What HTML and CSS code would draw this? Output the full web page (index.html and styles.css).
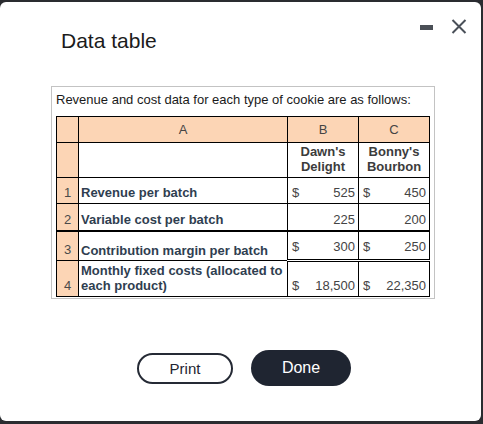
FILE: index.html
```html
<!DOCTYPE html>
<html>
<head>
<meta charset="utf-8">
<link rel="stylesheet" href="styles.css">
</head>
<body>
<div class="dialog">
  <div class="header">
    <h1 class="title">Data table</h1>
    <div class="controls">
      <span class="minimize"></span>
      <svg class="close" width="16" height="15" viewBox="0 0 16 15"><path d="M1.5 1 L14.5 14 M14.5 1 L1.5 14" stroke="#4a5059" stroke-width="2" fill="none"/></svg>
    </div>
  </div>
  <div class="box">
    <p class="intro">Revenue and cost data for each type of cookie are as follows:</p>
    <table class="data">
      <colgroup>
        <col class="c-idx"><col class="c-a"><col class="c-b"><col class="c-c">
      </colgroup>
      <tr class="r-head">
        <td class="idx"></td><td class="hd">A</td><td class="hd">B</td><td class="hd">C</td>
      </tr>
      <tr class="r-names">
        <td class="idx"></td><td></td><td class="nm">Dawn's<br>Delight</td><td class="nm">Bonny's<br>Bourbon</td>
      </tr>
      <tr class="r1">
        <td class="idx">1</td><td class="lbl">Revenue per batch</td>
        <td><div class="amt"><span>$</span><span>525</span></div></td>
        <td><div class="amt"><span>$</span><span>450</span></div></td>
      </tr>
      <tr class="r2">
        <td class="idx">2</td><td class="lbl">Variable cost per batch</td>
        <td><div class="amt"><span></span><span>225</span></div></td>
        <td><div class="amt"><span></span><span>200</span></div></td>
      </tr>
      <tr class="r3">
        <td class="idx">3</td><td class="lbl">Contribution margin per batch</td>
        <td class="dbl"><div class="amt"><span>$</span><span>300</span></div></td>
        <td class="dbl"><div class="amt"><span>$</span><span>250</span></div></td>
      </tr>
      <tr class="r4">
        <td class="idx">4</td><td class="lbl">Monthly fixed costs (allocated to<br>each product)</td>
        <td><div class="amt"><span>$</span><span>18,500</span></div></td>
        <td><div class="amt"><span>$</span><span>22,350</span></div></td>
      </tr>
    </table>
  </div>
  <div class="actions">
    <button class="btn print">Print</button>
    <button class="btn done">Done</button>
  </div>
</div>
</body>
</html>
```
FILE: styles.css
```css
html, body {
  margin: 0;
  padding: 0;
  background: #2a2c30;
  width: 483px;
  height: 424px;
  overflow: hidden;
  font-family: "Liberation Sans", Arial, sans-serif;
}
.dialog {
  margin-top: 2px;
  width: 481px;
  height: 419px;
  background: #ffffff;
  border-radius: 6px;
  position: relative;
}
.header {
  display: flex;
  justify-content: space-between;
  align-items: flex-start;
}
.title {
  margin: 27px 0 0 61px;
  font-size: 21px;
  line-height: 24px;
  font-weight: normal;
  color: #1b1b1b;
}
.controls {
  display: flex;
  align-items: flex-start;
  margin: 17px 14px 0 0;
}
.minimize {
  display: block;
  width: 13px;
  height: 5px;
  background: #4a4f56;
  margin: 6px 18px 0 0;
}
.close {
  display: block;
}
.box {
  margin: 33px 0 0 51px;
  width: 382px;
  height: 211px;
  border: 1px solid #c3c3c3;
  padding: 0;
}
.intro {
  margin: 5px 0 0 4px;
  font-size: 13px;
  line-height: 15px;
  color: #1a1a1a;
}
.data {
  margin: 9px 0 0 4px;
  border-collapse: collapse;
  table-layout: fixed;
  width: 374px;
  font-size: 13px;
  line-height: 15px;
}
.c-idx { width: 22px; }
.c-a { width: 209px; }
.c-b { width: 71px; }
.c-c { width: 71px; }
.data td {
  border: 1px solid #000;
  padding: 0 3px 3px 2px;
  vertical-align: bottom;
  color: #444;
  white-space: nowrap;
}
.data td.idx {
  background: #fcd5b5;
  text-align: center;
  padding: 0 0 3px 0;
  color: #4a4a4a;
}
.r-head td {
  background: #fcd5b5;
  height: 25px;
  vertical-align: middle;
  padding: 0;
}
.r-head td.idx { vertical-align: middle; padding: 0; }
.hd {
  text-align: center;
  color: #5a5a5a;
}
.r-names td { height: 31px; }
.data td.nm {
  text-align: center;
  font-weight: bold;
  color: #3c3c3c;
  padding: 0 0 3px 0;
}
.r1 td { height: 22px; }
.r2 td { height: 23px; border-bottom-width: 2px; }
.r3 td { height: 25px; padding-bottom: 2px; }
.data td.dbl { border-bottom: 3px double #000; padding-bottom: 5px; height: 20px; }
.r4 td { height: 31px; }
.lbl {
  font-weight: bold;
  color: #2f3e50 !important;
}
.amt {
  display: flex;
  justify-content: space-between;
  padding-left: 2px;
}
.actions {
  display: flex;
  align-items: center;
  margin: 51px 0 0 137px;
  gap: 18px;
}
.btn {
  font-family: "Liberation Sans", Arial, sans-serif;
  border-radius: 18px;
  cursor: pointer;
  padding: 0;
}
.print {
  width: 96px;
  height: 31px;
  background: #fff;
  border: 2px solid #252a35;
  color: #1f2532;
  font-size: 15px;
}
.done {
  width: 100px;
  height: 36px;
  background: #1f2531;
  border: none;
  color: #ffffff;
  font-size: 16px;
}
```
